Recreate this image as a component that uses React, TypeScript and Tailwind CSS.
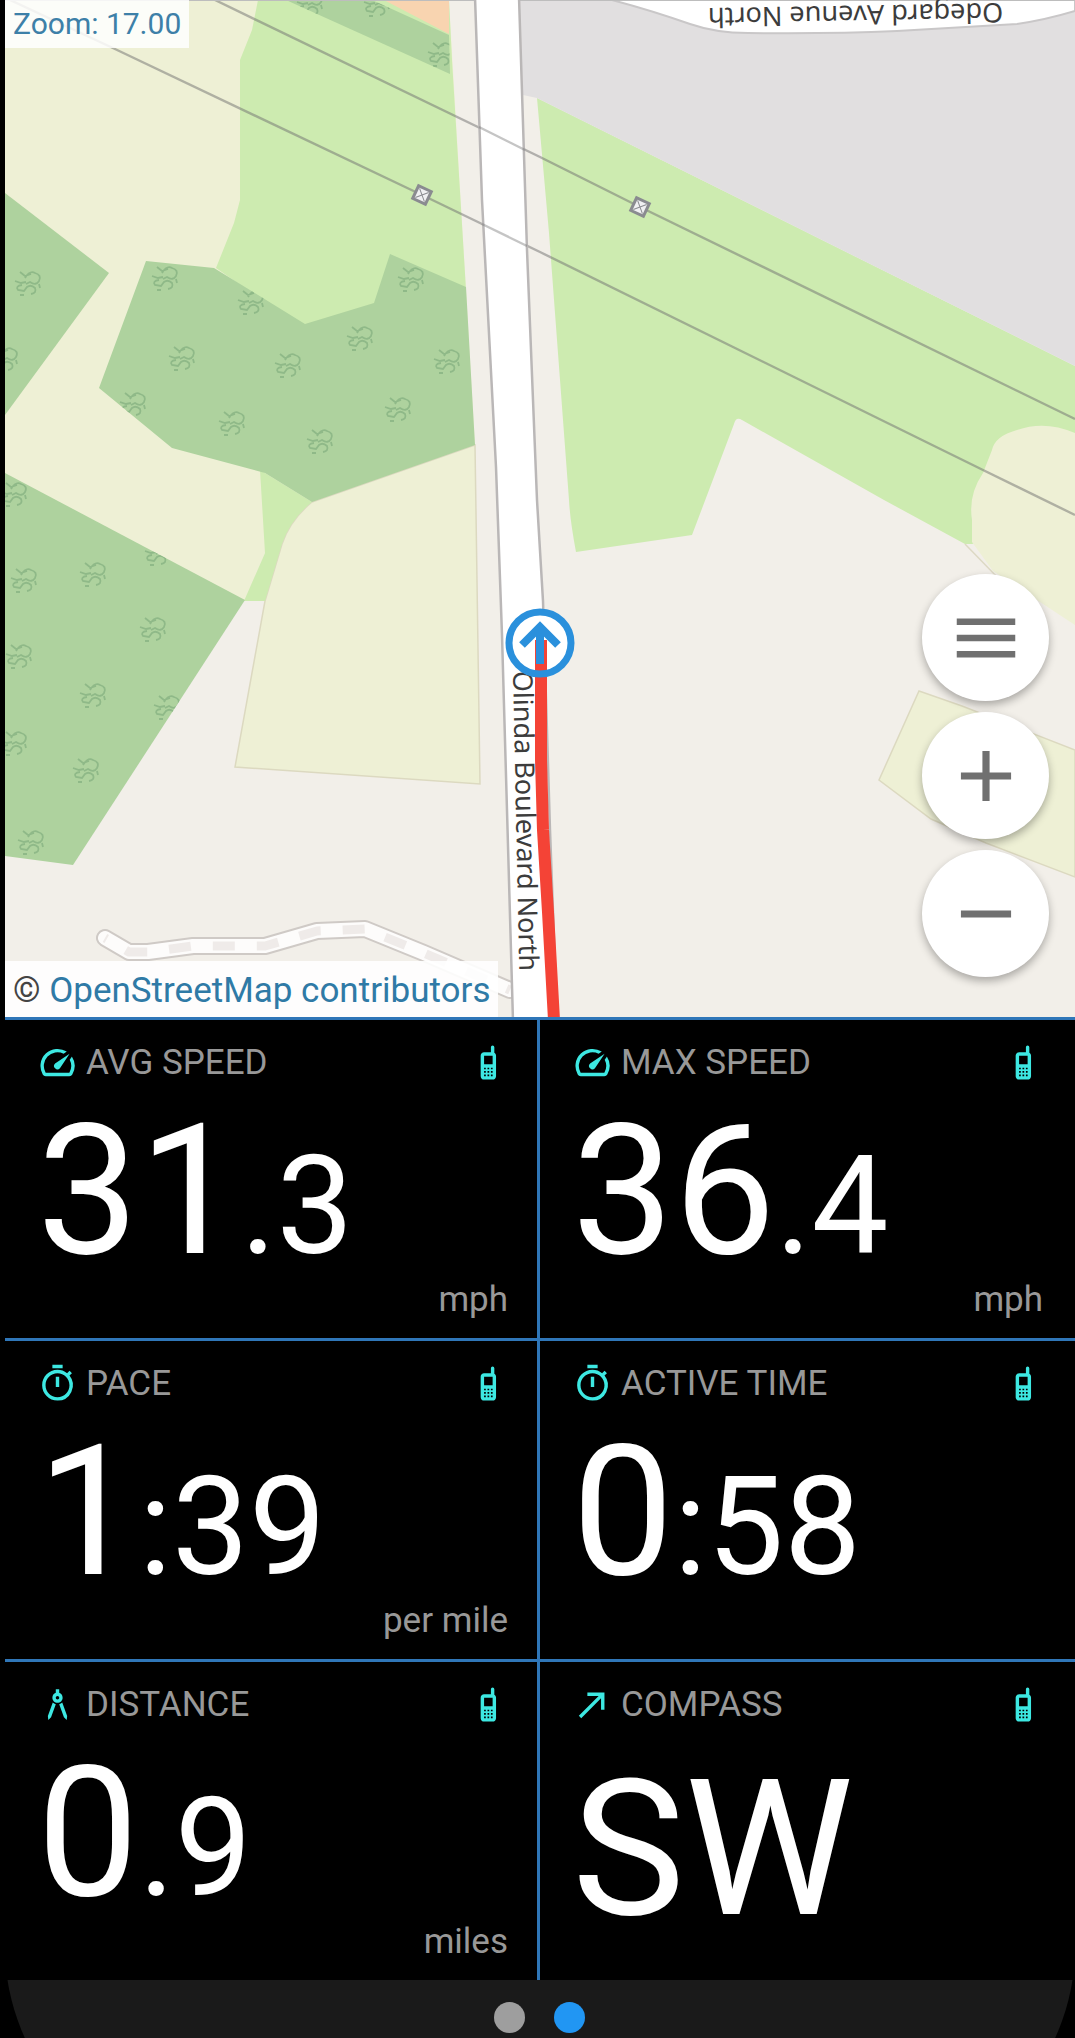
import type { ReactNode } from "react";
import {
  MdAdd,
  MdArchitecture,
  MdCallMade,
  MdMenu,
  MdRemove,
  MdOutlineSpeed,
  MdOutlineTimer,
} from "react-icons/md";

const TREES: [number, number][] = [
  [28, 282], [165, 277], [251, 301], [411, 278], [360, 337], [182, 357],
  [288, 364], [447, 360], [133, 403], [232, 422], [320, 440], [398, 408],
  [441, 53], [310, 3], [377, 3], [14, 493], [5, 358], [24, 579], [93, 573],
  [153, 628], [19, 655], [93, 694], [167, 706], [14, 742], [86, 769],
  [31, 841], [158, 552],
];

const TOWERS: [number, number][] = [
  [422, 195],
  [640, 207],
];

const WOODS = [
  "M146 261 214 268 305 324 374 303 390 254 466 287 475 445 312 502 265 473 172 448 99 388Z",
  "M5 193 109 273 5 415Z",
  "M5 473 245 600 73 865 5 856Z",
  "M286 0H372L449 35 450 74Z",
];

function MapDrawing() {
  return (
    <svg
      className="block h-full w-full"
      viewBox="5 0 1070 1017"
      preserveAspectRatio="xMidYMid slice"
      role="img"
      aria-label="Map of Olinda Boulevard North"
    >
      <defs>
        <clipPath id="woods">
          {WOODS.map((d) => (
            <path key={d} d={d} />
          ))}
        </clipPath>
      </defs>

      <rect x="5" width="1070" height="1018" fill="#f2efe9" />

      {/* Fields */}
      <path d="M5 0H449L475 445 312 502 265 553 245 601 5 475Z" fill="#eef0d5" />
      <path
        d="M475 445 480 784 235 767 265 601 282 544Q290 520 312 502Z"
        fill="#eef0d5"
        stroke="#dcd9c0"
        strokeWidth="1.5"
      />

      {/* Grass */}
      <path
        d="M258 0 252 30 240 60V200L234 223 216 268 305 330 374 310 390 258 466 290 452 60 449 0Z"
        fill="#cdebb0"
      />
      <path d="M260 470 312 502Q290 520 282 544L265 601H244L265 553Z" fill="#cdebb0" />
      <path
        d="M537 98 1075 366V520L972 544 965 544 884 500 742 420Q736 416 734 424L692 535 576 552Q570 520 569 500L549 233Z"
        fill="#cdebb0"
      />
      <path
        d="M1075 433Q1045 420 1017 430 995 436 992 450L983 473Q968 495 972 520V542L993 571 1075 625Z"
        fill="#eef0d5"
      />
      <path d="M965 544 1000 580" stroke="#ddd9c4" strokeWidth="1.5" />
      <path
        d="M919 691 962 706 1075 750V877L986 843 931 819 879 780Z"
        fill="#eef0d5"
        stroke="#dcd9c0"
        strokeWidth="1.5"
      />

      {/* Woods */}
      <g fill="#aed29e">
        {WOODS.map((d) => (
          <path key={d} d={d} />
        ))}
      </g>
      <g clipPath="url(#woods)">
        {TREES.map(([x, y]) => (
          <path
            key={`${x}-${y}`}
            transform={`translate(${x} ${y})`}
            d="M-13-1-7 1-2 0M-8-10-3-6 3-8M-3-4Q2-12 7-9 14-7 11-1 8 4 2 0L-2 2M-6 3Q-13 4-10 8L-4 9-1 5Q3 2 7 6 9 11 3 12M11 2 12 6M-8 13H-4"
            fill="none"
            stroke="#8fb988"
            strokeWidth="1.8"
          />
        ))}
      </g>

      {/* Residential corner and industrial area */}
      <path d="M384 0H449V34Z" fill="#f8d4b0" />
      <path d="M519 0H1075V366L537 98 523 95Z" fill="#e1dfe0" />

      {/* Power lines */}
      <g fill="none" stroke="#6f6f6f" strokeOpacity=".5" strokeWidth="2.4">
        <path d="M215 0 540 157 640 207 1075 419" />
        <path d="M10 0 115 49 422 195 540 252 983 470 1075 515" />
      </g>

      {/* Odegard Avenue */}
      <path
        d="M612 0Q650 10 690 24 716 33 748 33 830 34 897 31L1017 24Q1045 20 1075 11V0Z"
        fill="#fff"
        stroke="#c9c7c8"
        strokeWidth="2"
      />
      <path d="M5 0H1075" stroke="#bdbdbd" strokeWidth="2" />

      {/* Track */}
      <g fill="none" strokeLinejoin="round">
        <path
          d="M105 938 129 952H148L193 946H265L317 931 365 929 424 953 510 990"
          stroke="#cfcac6"
          strokeWidth="18"
          strokeLinecap="round"
        />
        <path
          d="M105 938 129 952H148L193 946H265L317 931 365 929 424 953 510 990"
          stroke="#fdfcfb"
          strokeWidth="14"
          strokeLinecap="round"
        />
        <path
          d="M105 938 129 952H148L193 946H265L317 931 365 929 424 953 510 990"
          stroke="#efebe9"
          strokeWidth="9"
          strokeDasharray="22 22"
          strokeDashoffset="-24"
        />
      </g>

      {/* Olinda Boulevard */}
      <path
        d="M475-3 482 200 496 467 502 635 513 1021H557L550 830 543 601 537 500 527 250 519-3Z"
        fill="#fff"
        stroke="#bab7b7"
        strokeWidth="2.5"
      />
      <g fill="none" stroke="#6f6f6f" strokeOpacity=".4" strokeWidth="2.4">
        <path d="M479 127 525 150M482 224 527 246" />
      </g>

      {TOWERS.map(([x, y]) => (
        <g key={x} transform={`translate(${x} ${y}) rotate(25)`} stroke="#8a8b90">
          <rect x="-7" y="-7" width="14" height="14" fill="#f0f0f2" strokeWidth="3" />
          <path d="M-5-5 5 5M5-5-5 5" strokeWidth="1" />
        </g>
      ))}

      {/* Street names */}
      <g fill="#3c3c3c" fontFamily="'Noto Sans', sans-serif" fontSize="27">
        <text transform="translate(513 671) rotate(88.8)">Olinda Boulevard North</text>
        <text transform="translate(1003 3) rotate(179)">Odegard Avenue North</text>
      </g>

      {/* Recorded track and position */}
      <circle cx="540" cy="643" r="34" fill="#fff" />
      <path
        d="M541 640 541 760 543 830 548 912 554 1020"
        fill="none"
        stroke="#f44336"
        strokeWidth="12"
      />
      <circle cx="540" cy="643" r="31" fill="none" stroke="#2a90dc" strokeWidth="7" />
      <path d="M540 664V632M522 645 540 627 558 645" fill="none" stroke="#2a90dc" strokeWidth="8" />
    </svg>
  );
}

function MapButton({ label, children }: { label: string; children: ReactNode }) {
  return (
    <button
      type="button"
      aria-label={label}
      className="flex size-[127px] items-center justify-center rounded-full bg-white text-[#707070] shadow-[0_4px_8px_rgba(0,0,0,0.3)]"
    >
      {children}
    </button>
  );
}

function PhoneIcon() {
  return (
    <svg viewBox="0 0 24 24" className="size-[41px] text-[#3de8e2]" fill="currentColor" aria-hidden="true">
      <path d="M15,2A1,1 0 0,0 14,3V6H10C8.89,6 8,6.89 8,8V20C8,21.11 8.89,22 10,22H15C16.11,22 17,21.11 17,20V8C17,7.26 16.6,6.62 16,6.28V3A1,1 0 0,0 15,2M10,8H15V13H10V8M10,15H11V16H10V15M12,15H13V16H12V15M14,15H15V16H14V15M10,17H11V18H10V17M12,17H13V18H12V17M14,17H15V18H14V17M10,19H11V20H10V19M12,19H13V20H12V19M14,19H15V20H14V19Z" />
    </svg>
  );
}

type Metric = {
  label: string;
  icon: ReactNode;
  value: string;
  fraction?: string;
  unit?: string;
};

const METRICS: Metric[] = [
  { label: "AVG SPEED", icon: <MdOutlineSpeed />, value: "31", fraction: ".3", unit: "mph" },
  { label: "MAX SPEED", icon: <MdOutlineSpeed />, value: "36", fraction: ".4", unit: "mph" },
  { label: "PACE", icon: <MdOutlineTimer />, value: "1", fraction: ":39", unit: "per mile" },
  { label: "ACTIVE TIME", icon: <MdOutlineTimer />, value: "0", fraction: ":58" },
  { label: "DISTANCE", icon: <MdArchitecture />, value: "0", fraction: ".9", unit: "miles" },
  { label: "COMPASS", icon: <MdCallMade />, value: "SW" },
];

function MetricCell({ label, icon, value, fraction, unit }: Metric) {
  return (
    <section className="border-t-[3px] border-[#2f76b8] px-8 pt-[22px] pb-5 odd:border-r-[3px] odd:pr-[29px]">
      <div className="flex items-center gap-2">
        <span className="text-[41px] text-[#3de8e2]">{icon}</span>
        <h2 className="flex-1 text-[35px] leading-[41px] text-[#989898]">{label}</h2>
        <PhoneIcon />
      </div>
      {fraction ? (
        <p className="mt-[18px] text-[181px] leading-none text-white">
          {value}
          <span className="text-[137px] leading-none">{fraction}</span>
        </p>
      ) : (
        <p className="mt-[29px] text-[190px] leading-none text-white">{value}</p>
      )}
      {unit && <p className="text-right text-[35px] leading-9 text-[#989898]">{unit}</p>}
    </section>
  );
}

export default function App() {
  return (
    <div className="min-h-screen bg-black pl-[5px] font-['Roboto',sans-serif]">
      <div className="relative aspect-[1070/1017] overflow-hidden">
        <MapDrawing />
        <div className="absolute top-0 left-0 bg-white/85 px-2 py-1.5 text-[30px] leading-9 text-[#3d80a8]">
          Zoom: 17.00
        </div>
        <div className="absolute bottom-0 left-0 bg-white/90 px-2 pt-2.5 pb-1.5 text-[35px] leading-10 text-[#444]">
          ©{" "}
          <a href="#copyright" className="text-[#2f7aa6]">
            OpenStreetMap contributors
          </a>
        </div>
        <div className="absolute right-[26px] bottom-10 flex flex-col gap-[11px]">
          <MapButton label="Menu">
            <MdMenu size={78} />
          </MapButton>
          <MapButton label="Zoom in">
            <MdAdd size={86} />
          </MapButton>
          <MapButton label="Zoom out">
            <MdRemove size={86} />
          </MapButton>
        </div>
      </div>

      <main className="grid auto-rows-fr grid-cols-2">
        {METRICS.map((metric) => (
          <MetricCell key={metric.label} {...metric} />
        ))}
      </main>

      <footer className="relative flex h-[58px] items-center justify-center gap-[29px] overflow-hidden pt-4 pr-px">
        <div className="absolute inset-x-0 -top-[33px] h-[218px] rounded-b-[218px] bg-[#1a1a1a]" />
        <button type="button" aria-label="Page 1" className="relative size-[31px] rounded-full bg-[#9e9e9e]" />
        <button
          type="button"
          aria-label="Page 2"
          aria-current="page"
          className="relative size-[31px] rounded-full bg-[#2196f3]"
        />
      </footer>
    </div>
  );
}
